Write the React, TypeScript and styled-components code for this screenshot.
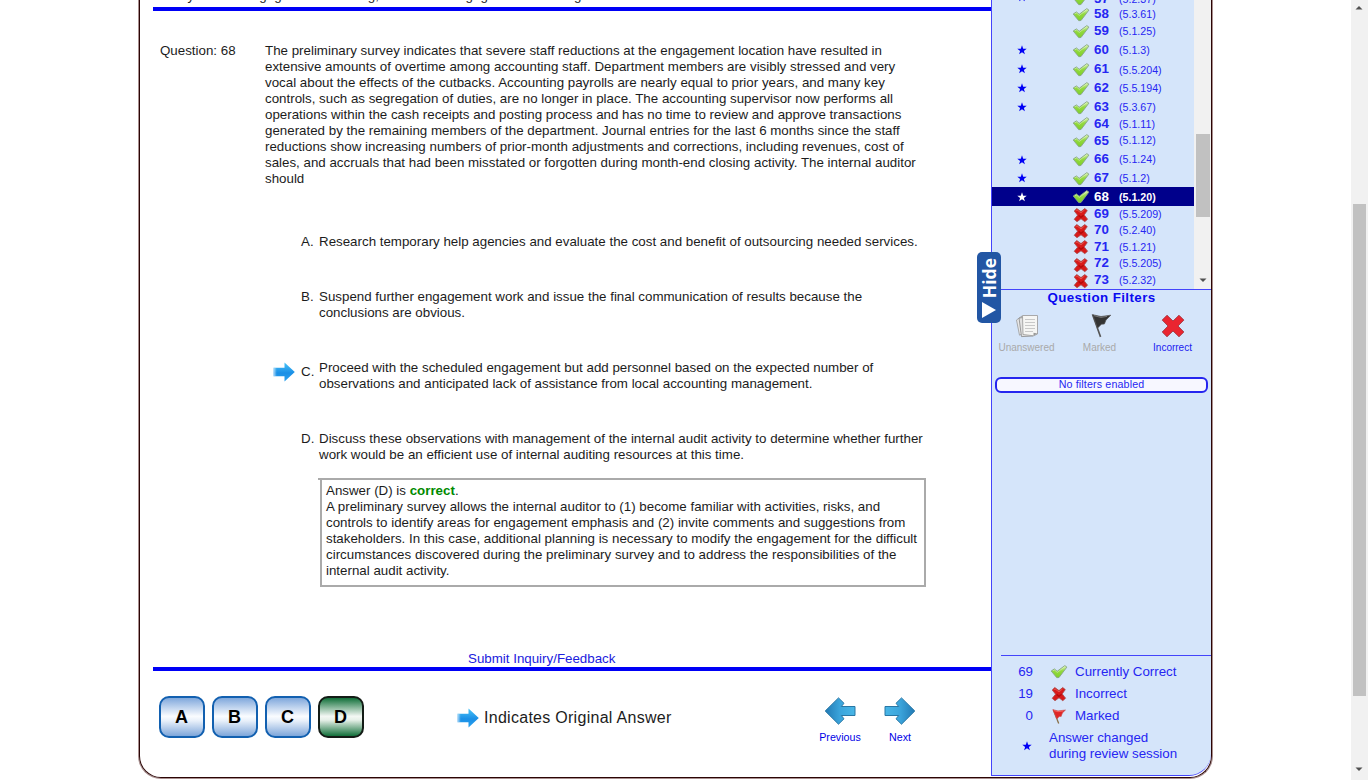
import React from 'react';
import styled, { createGlobalStyle } from 'styled-components';

const GlobalStyle = createGlobalStyle`
  * { box-sizing: border-box; }
  html, body { margin: 0; padding: 0; height: 780px; overflow: hidden; background: #fff; }
  body { font-family: "Liberation Sans", Arial, sans-serif; font-size: 13.333px; line-height: 16px; color: #1c1c1c; }
`;

const Page = styled.div`
  display: flex;
  justify-content: space-between;
  height: 780px;
  padding-left: 139px;
`;

const Frame = styled.main`
  display: flex;
  width: 1073px;
  height: 778px;
  border: 1px solid #2b0505;
  border-top: 0;
  border-radius: 0 0 22px 22px;
  box-shadow: 0 0 0 1px #a98f8f;
  overflow: hidden;
`;

const Content = styled.section`
  display: flex;
  flex-direction: column;
  width: 851px;
  padding-left: 13px;
`;

const StudyTitle = styled.div`
  margin-top: -12px;
  height: 19px;
  padding-left: 7px;
  white-space: nowrap;
  word-spacing: 1px;
  flex: none;
`;

const Rule = styled.div`
  height: 4px;
  flex: none;
  background: #0000f6;
`;

const Question = styled.div`
  display: flex;
  height: 223px;
  padding: 32px 0 0 7px;
  flex: none;
`;

const QuestionLabel = styled.div`
  width: 105px;
`;

const Line = styled.div`
  height: 16px;
  white-space: nowrap;
`;

const Option = styled.div<{ $height: number }>`
  display: flex;
  flex: none;
  height: ${(p) => p.$height}px;
  padding-left: 120px;
`;

const OptionMark = styled.div`
  width: 28px;
  padding-top: 2px;
`;

const OptionLetter = styled.div<{ $drop?: number }>`
  width: 18px;
  padding-top: ${(p) => p.$drop ?? 0}px;
`;

const Explanation = styled.div`
  position: relative;
  flex: none;
  width: 606px;
  height: 109px;
  margin-left: 167px;
  padding: 3px 0 0 4px;
  border: 2px solid #aaa;
  &::before {
    content: '';
    position: absolute;
    left: -4px;
    top: -2px;
    width: 4px;
    height: 2px;
    background: #aaa;
  }
`;

const Correct = styled.b`
  color: #008a00;
`;

const Inquiry = styled.a`
  display: block;
  flex: none;
  height: 16px;
  margin: 64px 0 0 315px;
  color: #2020dd;
`;

const Controls = styled.div`
  display: flex;
  flex: none;
  padding: 25px 0 0 6px;
`;

const AnswerGroup = styled.div`
  display: flex;
  gap: 7px;
  width: 298px;
`;

const AnswerButton = styled.button<{ $correct?: boolean }>`
  width: 46px;
  height: 42px;
  padding: 0 1px 0 0;
  border: 2px solid ${(p) => (p.$correct ? '#141c16' : '#1260b0')};
  border-radius: 10px;
  background: ${(p) =>
    p.$correct
      ? 'linear-gradient(#12703a, #f4f8f4 48%, #e6f0e8 58%, #12703a)'
      : 'linear-gradient(#80a8dc, #fafcff 48%, #e8f0fa 60%, #7ea6da)'};
  font: bold 18px/38px "Liberation Sans", Arial, sans-serif;
  color: #000;
`;

const Legend = styled.div`
  display: flex;
  align-items: center;
  gap: 5px;
  width: 353px;
  height: 43px;
  font-size: 16px;
  letter-spacing: 0.28px;
`;

const Pager = styled.div`
  display: flex;
  padding-top: 1px;
`;

const PagerLink = styled.a`
  display: flex;
  flex-direction: column;
  align-items: center;
  width: 60px;
  gap: 4px;
  color: #0000e6;
  font-size: 10.667px;
`;

const Sidebar = styled.aside`
  display: flex;
  flex-direction: column;
  width: 220px;
  height: 776px;
  background: #d5e5fa;
  border-left: 1px solid #4444fb;
  border-bottom: 1px solid #4444fb;
  border-radius: 0 0 22px 0;
  color: #2626f2;
`;

const ListPane = styled.div`
  display: flex;
  flex: none;
  height: 290px;
  overflow: hidden;
  border-bottom: 1px solid #4444fb;
`;

const List = styled.div`
  width: 202px;
  margin-top: -13px;
`;

const Row = styled.div<{ $height: number; $current?: boolean }>`
  display: flex;
  height: ${(p) => p.$height}px;
  background: ${(p) => (p.$current ? '#00008b' : 'transparent')};
  color: ${(p) => (p.$current ? '#fff' : 'inherit')};
  font-weight: ${(p) => (p.$current ? 'bold' : 'normal')};
`;

const Cell = styled.div<{ $width: number; $top: number; $small?: boolean }>`
  width: ${(p) => p.$width}px;
  padding-top: ${(p) => p.$top}px;
  font-size: ${(p) => (p.$small ? 10.667 : 13.333)}px;
  font-weight: ${(p) => (p.$small ? 'inherit' : 'bold')};
  line-height: 16px;
  white-space: nowrap;
`;

const StarSlot = styled.div`
  padding-left: 25px;
`;

const ListScroll = styled.div`
  width: 17px;
  height: 289px;
  padding: 134px 1px 0 2px;
  background: #f1f1f1;
  svg { margin: 61px 0 0 3px; }
`;

const ListThumb = styled.div`
  height: 83px;
  background: #c1c1c1;
`;

const HideTab = styled.button`
  position: absolute;
  left: 977px;
  top: 252px;
  width: 24px;
  height: 71px;
  padding: 0 0 5px;
  border: 0;
  border-radius: 5px;
  background: #2256a4;
  color: #fff;
  display: flex;
  flex-direction: column;
  align-items: center;
  justify-content: flex-end;
  gap: 4px;
  span {
    writing-mode: vertical-rl;
    transform: rotate(180deg);
    font: 700 17.5px/22px "Open Sans", sans-serif;
  }
`;

const FilterTitle = styled.h2`
  margin: 0;
  font-size: 13.333px;
  line-height: 16px;
  letter-spacing: 0.42px;
  text-align: center;
  color: #0a0af0;
`;

const FilterRow = styled.div`
  display: flex;
  margin-left: -2px;
  padding-top: 7px;
`;

const Filter = styled.button<{ $active?: boolean }>`
  flex: 0 0 73px;
  padding: 0;
  border: 0;
  background: none;
  display: flex;
  flex-direction: column;
  align-items: center;
  gap: 2px;
  font: 10px/14px "Liberation Sans", Arial, sans-serif;
  color: ${(p) => (p.$active ? '#2020f0' : '#a9a9a9')};
`;

const FilterStatus = styled.div`
  margin: 22px 3px 0;
  height: 16px;
  border: 2px solid #2525ef;
  border-radius: 6px;
  background: #f7f7ff;
  font-size: 10.667px;
  line-height: 11px;
  text-align: center;
  letter-spacing: 0.15px;
`;

const Summary = styled.div`
  margin: auto 0 0 9px;
  height: 120px;
  padding-top: 5px;
  border-top: 1px solid #4444fb;
`;

const SummaryRow = styled.div`
  display: flex;
  align-items: center;
  height: 22px;
`;

const Count = styled.span`
  width: 32px;
  text-align: right;
`;

const SummaryIcon = styled.span`
  width: 42px;
  padding-left: 17px;
  height: 17px;
`;

const Changed = styled.div`
  display: flex;
  align-items: center;
  padding: 3px 0 0 21px;
  gap: 17px;
`;

const PageScroll = styled.div`
  width: 17px;
  height: 780px;
  padding: 5px 2px 0;
  background: #f1f1f1;
  svg { margin-left: 2px; }
`;

const PageThumb = styled.div`
  height: 492px;
  margin: 194px 0 71px;
  background: #c1c1c1;
`;

const Block = styled.svg`
  display: block;
  flex: none;
`;

const Check = () => (
  <Block width="18" height="16" viewBox="0 0 18 16">
    <defs>
      <linearGradient id="leaf" x1="0" y1="0" x2="0" y2="1">
        <stop offset="0" stopColor="#dff3bd" />
        <stop offset=".45" stopColor="#92d940" />
        <stop offset="1" stopColor="#7fd028" />
      </linearGradient>
    </defs>
    <path d="M1.2 7 4.4 4.9 7.2 7.3 14.8 1.6 16.9 3.1 9 13.5 6.8 13.7z" fill="url(#leaf)" stroke="#86a585" strokeWidth=".9" strokeLinejoin="round" />
    <path d="M2.8 6.9 4.5 6 7.3 8.4 14.5 2.9" fill="none" stroke="#f4fde4" strokeWidth=".7" opacity=".6" />
  </Block>
);

const Cross = () => (
  <Block width="18" height="16" viewBox="0 0 18 16">
    <path d="M2.2 4 4.8 1.5 9 4.6 12.7 1.5 15.3 3.6 12.2 7.9 15.6 12.2 12.8 14.7 9 11.8 5 14.7 2.2 12.3 5.6 8.2z" fill="#d81a1a" stroke="#a84c4c" strokeWidth=".8" strokeLinejoin="round" />
    <path d="M3.8 3.8 5 2.9 9 5.9 12.6 2.9" fill="none" stroke="#f07a70" strokeWidth=".8" opacity=".7" />
    <path d="M6.6 8.4 9 10.3 11.6 8.2" fill="none" stroke="#b40c0c" strokeWidth="1.4" />
  </Block>
);

const Star = ({ white }: { white?: boolean }) => (
  <Block width="10" height="10" viewBox="0 0 10 10">
    <path d="M5 .3 6.2 3.7 9.7 3.8 6.9 5.9 7.9 9.3 5 7.3 2.1 9.3 3.1 5.9 .3 3.8 3.8 3.7z" fill={white ? '#fff' : '#0000f5'} />
  </Block>
);

const BlueArrow = () => (
  <Block width="22" height="20" viewBox="0 0 22 20">
    <defs>
      <linearGradient id="sky" x1="0" y1="0" x2="0" y2="1">
        <stop offset="0" stopColor="#49c4f8" />
        <stop offset=".55" stopColor="#1a8fe6" />
        <stop offset="1" stopColor="#2ba2ee" />
      </linearGradient>
      <linearGradient id="skyFade" x1="0" x2="1">
        <stop offset="0" stopColor="#fff" stopOpacity=".65" />
        <stop offset=".3" stopColor="#fff" stopOpacity="0" />
      </linearGradient>
    </defs>
    <path d="M.5 5.8H11.5V.6L21.8 10 11.5 19.5V14.3H.5z" fill="url(#sky)" />
    <path d="M.5 5.8H11.5V14.3H.5z" fill="url(#skyFade)" />
  </Block>
);

const PagerArrow = ({ back }: { back?: boolean }) => (
  <Block width="32" height="28" viewBox="0 0 32 28">
    <defs>
      <linearGradient id="deep" x1="0" x2="1">
        <stop offset="0" stopColor="#49b6e6" />
        <stop offset=".5" stopColor="#3ba5dc" />
        <stop offset="1" stopColor="#2179b4" />
      </linearGradient>
    </defs>
    <path
      transform={back ? 'matrix(-1 0 0 1 32 0)' : undefined}
      d="M1 9.5H14.7L12 6.3 17.5.9 30.8 14 17.5 27.2 12 21.8 14.7 18.5H1z"
      fill="url(#deep)"
      stroke="#2877a5"
      strokeWidth="1"
    />
  </Block>
);

const Sheets = () => (
  <Block width="24" height="26" viewBox="0 0 24 26">
    <path d="M1.5 7 7 3 9 20 4.5 22.2z" fill="#e8e8e8" stroke="#999" strokeWidth=".8" />
    <path d="M4 5 18 3.5V23L6.5 23.6z" fill="#e2e2e2" stroke="#888" strokeWidth=".8" />
    <path d="M7.5 2.5H22.5V21L18.5 22.8 8 21.5z" fill="#f6f6f4" stroke="#a0a0a0" strokeWidth=".9" />
    <path d="M10 6.5H20M10 9.5H20M10 12.5H20M10 15.5H20M10 18.5H18" stroke="#c8c8c8" />
    <path d="M22.5 20.5 18.5 22.8V19.7z" fill="#999" />
  </Block>
);

const Flag = () => (
  <Block width="24" height="26" viewBox="-1 0 24 26">
    <path d="M2.7 1.5 4.3 1.4 12.3 23.5 10.8 24.2z" fill="#555" />
    <path d="M3.7 1.7 12 3.5 21.8 2.2 17 7 15.4 11 12.4 11.2 8.5 15.2z" fill="#343434" stroke="#555" strokeWidth=".7" />
    <path d="M5 2.7 12 4.4 18 3.4" stroke="#777" fill="none" />
  </Block>
);

const RedFlag = () => (
  <Block width="18" height="17" viewBox="0 0 18 17">
    <path d="M3.4 2 8.7 15.6" stroke="#8a7048" strokeWidth="1.3" />
    <path d="M2.8 1.6 8 2.9 15.5 2 12.4 5 11.2 8.4 9.2 8.6 6.8 11z" fill="#e02626" stroke="#c85050" strokeWidth=".6" />
    <path d="M4 2.6 8 3.7 13 3" stroke="#ff7770" fill="none" strokeWidth=".7" />
  </Block>
);

const BigCross = () => (
  <Block width="24" height="26" viewBox="0 0 24 26">
    <path d="M1.2 7.1 6 2.2 12 8 18 2.2 22.9 7.1 17 13 22.9 19 18 23.8 12 18 6 23.8 1.2 19 7 13z" fill="#ea2530" stroke="#9a3038" strokeWidth=".8" />
  </Block>
);

const Caret = ({ up }: { up?: boolean }) => (
  <Block width="8" height="5" viewBox="0 0 8 5">
    <path d={up ? 'M0.5 4.5 4 1 7.5 4.5z' : 'M0.5 .5 4 4 7.5 .5z'} fill="#505050" />
  </Block>
);

type Entry = { n: number; code: string; h: number; num: number; ref: number; icon: number; star?: boolean; wrong?: boolean };

const entries: Entry[] = [
  { n: 57, code: '(5.2.37)', h: 19, num: 4, ref: 4, icon: 4, star: true },
  { n: 58, code: '(5.3.61)', h: 17, num: 0, ref: 0, icon: 1 },
  { n: 59, code: '(5.1.25)', h: 17, num: 0, ref: 0, icon: 1 },
  { n: 60, code: '(5.1.3)', h: 19, num: 2, ref: 2, icon: 3, star: true },
  { n: 61, code: '(5.5.204)', h: 19, num: 2, ref: 3, icon: 3, star: true },
  { n: 62, code: '(5.5.194)', h: 19, num: 2, ref: 2, icon: 3, star: true },
  { n: 63, code: '(5.3.67)', h: 18, num: 2, ref: 2, icon: 3, star: true },
  { n: 64, code: '(5.1.11)', h: 17, num: 1, ref: 1, icon: 1 },
  { n: 65, code: '(5.1.12)', h: 18, num: 1, ref: 0, icon: 1 },
  { n: 66, code: '(5.1.24)', h: 18, num: 1, ref: 1, icon: 2, star: true },
  { n: 67, code: '(5.1.2)', h: 19, num: 2, ref: 2, icon: 3, star: true },
  { n: 68, code: '(5.1.20)', h: 19, num: 2, ref: 2, icon: 2, star: true },
  { n: 69, code: '(5.5.209)', h: 16, num: -1, ref: 0, icon: 1, wrong: true },
  { n: 70, code: '(5.2.40)', h: 17, num: 0, ref: 0, icon: 1, wrong: true },
  { n: 71, code: '(5.1.21)', h: 16, num: 0, ref: 0, icon: 0, wrong: true },
  { n: 72, code: '(5.5.205)', h: 17, num: 0, ref: 0, icon: 2, wrong: true },
  { n: 73, code: '(5.2.32)', h: 17, num: 0, ref: 0, icon: 1, wrong: true },
];

const passage = [
  'The preliminary survey indicates that severe staff reductions at the engagement location have resulted in',
  'extensive amounts of overtime among accounting staff. Department members are visibly stressed and very',
  'vocal about the effects of the cutbacks. Accounting payrolls are nearly equal to prior years, and many key',
  'controls, such as segregation of duties, are no longer in place. The accounting supervisor now performs all',
  'operations within the cash receipts and posting process and has no time to review and approve transactions',
  'generated by the remaining members of the department. Journal entries for the last 6 months since the staff',
  'reductions show increasing numbers of prior-month adjustments and corrections, including revenues, cost of',
  'sales, and accruals that had been misstated or forgotten during month-end closing activity. The internal auditor',
  'should',
];

const options = [
  { letter: 'A.', height: 55, lines: ['Research temporary help agencies and evaluate the cost and benefit of outsourcing needed services.'] },
  { letter: 'B.', height: 71, lines: ['Suspend further engagement work and issue the final communication of results because the', 'conclusions are obvious.'] },
  { letter: 'C.', height: 71, drop: 4, original: true, lines: ['Proceed with the scheduled engagement but add personnel based on the expected number of', 'observations and anticipated lack of assistance from local accounting management.'] },
  { letter: 'D.', height: 47, lines: ['Discuss these observations with management of the internal audit activity to determine whether further', 'work would be an efficient use of internal auditing resources at this time.'] },
];

const explanation = [
  'A preliminary survey allows the internal auditor to (1) become familiar with activities, risks, and',
  'controls to identify areas for engagement emphasis and (2) invite comments and suggestions from',
  'stakeholders. In this case, additional planning is necessary to modify the engagement for the difficult',
  'circumstances discovered during the preliminary survey and to address the responsibilities of the',
  'internal audit activity.',
];

export default function App() {
  return (
    <>
      <GlobalStyle />
      <Page>
        <Frame>
          <Content>
            <StudyTitle>Study Unit 5: Engagement Planning, Subunit 1: Engagement Planning</StudyTitle>
            <Rule />
            <Question>
              <QuestionLabel>Question: 68</QuestionLabel>
              <div>
                {passage.map((t) => (
                  <Line key={t}>{t}</Line>
                ))}
              </div>
            </Question>
            {options.map((o) => (
              <Option key={o.letter} $height={o.height}>
                <OptionMark>{o.original && <BlueArrow />}</OptionMark>
                <OptionLetter $drop={o.drop}>{o.letter}</OptionLetter>
                <div>
                  {o.lines.map((t) => (
                    <Line key={t}>{t}</Line>
                  ))}
                </div>
              </Option>
            ))}
            <Explanation>
              <Line>
                Answer (D) is <Correct>correct</Correct>.
              </Line>
              {explanation.map((t) => (
                <Line key={t}>{t}</Line>
              ))}
            </Explanation>
            <Inquiry>Submit Inquiry/Feedback</Inquiry>
            <Rule />
            <Controls>
              <AnswerGroup>
                <AnswerButton>A</AnswerButton>
                <AnswerButton>B</AnswerButton>
                <AnswerButton>C</AnswerButton>
                <AnswerButton $correct>D</AnswerButton>
              </AnswerGroup>
              <Legend>
                <BlueArrow />
                Indicates Original Answer
              </Legend>
              <Pager>
                <PagerLink>
                  <PagerArrow back />
                  Previous
                </PagerLink>
                <PagerLink>
                  <PagerArrow />
                  Next
                </PagerLink>
              </Pager>
            </Controls>
          </Content>
          <Sidebar>
            <ListPane>
              <List>
                {entries.map((e) => (
                  <Row key={e.n} $height={e.h} $current={e.n === 68}>
                    <Cell $width={80} $top={5}>
                      {e.star && <StarSlot><Star white={e.n === 68} /></StarSlot>}
                    </Cell>
                    <Cell $width={22} $top={e.icon}>{e.wrong ? <Cross /> : <Check />}</Cell>
                    <Cell $width={25} $top={e.num}>{e.n}</Cell>
                    <Cell $width={70} $top={e.ref} $small>{e.code}</Cell>
                  </Row>
                ))}
              </List>
              <ListScroll>
                <ListThumb />
                <Caret />
              </ListScroll>
            </ListPane>
            <FilterTitle>Question Filters</FilterTitle>
            <FilterRow>
              <Filter><Sheets />Unanswered</Filter>
              <Filter><Flag />Marked</Filter>
              <Filter $active><BigCross />Incorrect</Filter>
            </FilterRow>
            <FilterStatus>No filters enabled</FilterStatus>
            <Summary>
              <SummaryRow><Count>69</Count><SummaryIcon><Check /></SummaryIcon>Currently Correct</SummaryRow>
              <SummaryRow><Count>19</Count><SummaryIcon><Cross /></SummaryIcon>Incorrect</SummaryRow>
              <SummaryRow><Count>0</Count><SummaryIcon><RedFlag /></SummaryIcon>Marked</SummaryRow>
              <Changed>
                <Star />
                <div>Answer changed<br />during review session</div>
              </Changed>
            </Summary>
          </Sidebar>
        </Frame>
        <HideTab>
          <span>Hide</span>
          <Block width="14" height="16" viewBox="0 0 14 16"><path d="M0 0 14 8 0 16z" fill="#fff" /></Block>
        </HideTab>
        <PageScroll>
          <Caret up />
          <PageThumb />
          <Caret />
        </PageScroll>
      </Page>
    </>
  );
}
